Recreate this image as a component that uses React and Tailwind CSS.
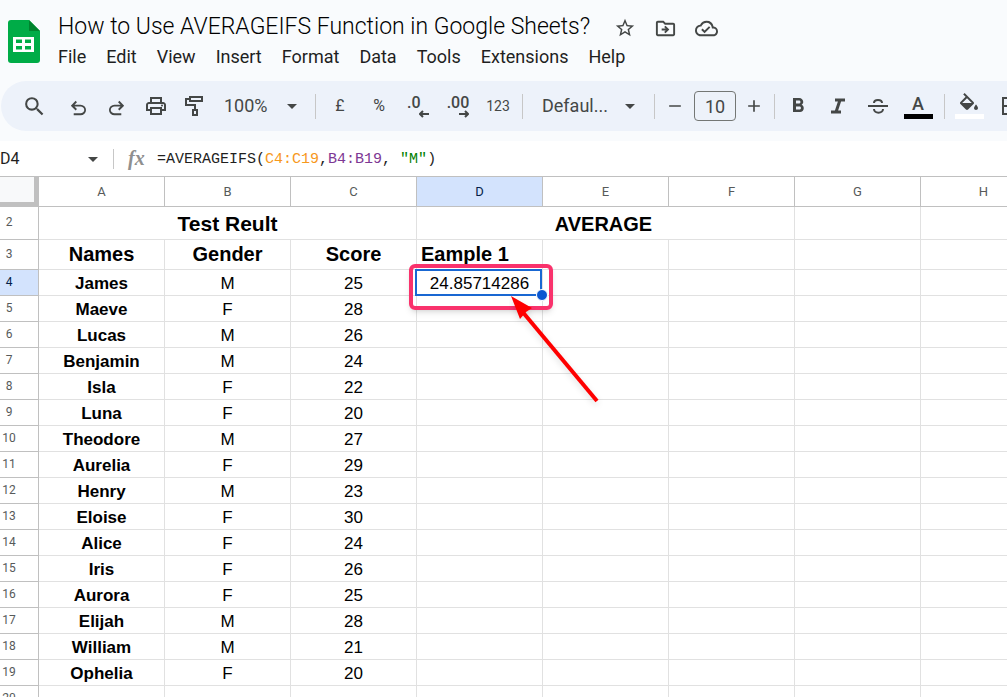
import { useState } from 'react';
import {
  MdSearch,
  MdOutlinePrint,
  MdStarBorder,
  MdOutlineDriveFileMove,
  MdOutlineCloudDone,
  MdArrowDropDown,
  MdRemove,
  MdAdd,
  MdFormatBold,
  MdBorderAll,
} from 'react-icons/md';

const menus = ['File', 'Edit', 'View', 'Insert', 'Format', 'Data', 'Tools', 'Extensions', 'Help'];

const columns = ['A', 'B', 'C', 'D', 'E', 'F', 'G', 'H'];

const students = [
  { name: 'James', gender: 'M', score: 25 },
  { name: 'Maeve', gender: 'F', score: 28 },
  { name: 'Lucas', gender: 'M', score: 26 },
  { name: 'Benjamin', gender: 'M', score: 24 },
  { name: 'Isla', gender: 'F', score: 22 },
  { name: 'Luna', gender: 'F', score: 20 },
  { name: 'Theodore', gender: 'M', score: 27 },
  { name: 'Aurelia', gender: 'F', score: 29 },
  { name: 'Henry', gender: 'M', score: 23 },
  { name: 'Eloise', gender: 'F', score: 30 },
  { name: 'Alice', gender: 'F', score: 24 },
  { name: 'Iris', gender: 'F', score: 26 },
  { name: 'Aurora', gender: 'F', score: 25 },
  { name: 'Elijah', gender: 'M', score: 28 },
  { name: 'William', gender: 'M', score: 21 },
  { name: 'Ophelia', gender: 'F', score: 20 },
];

const SheetsLogo = () => (
  <svg viewBox="0 0 32 43" className="w-8 h-[43px] shrink-0" aria-hidden="true">
    <path d="M3 0h18l11 11v29a3 3 0 0 1-3 3H3a3 3 0 0 1-3-3V3a3 3 0 0 1 3-3z" fill="#00ac47" />
    <path d="M21 0l11 11H21z" fill="#00832d" />
    <path
      d="M5 17h21v15H5zM8 19.500v3.500h6v-3.500zM17 19.500v3.500h6v-3.500zM8 26v3.500h6V26zM17 26v3.500h6V26z"
      fill="#fff"
      fillRule="evenodd"
    />
  </svg>
);

const Symbol = ({ d, className }) => (
  <svg viewBox="0 -960 960 960" fill="currentColor" className={className} aria-hidden="true">
    <path d={d} />
  </svg>
);

const UNDO =
  'M280-200v-80h284q63 0 109.500-40T720-420q0-60-46.500-100T564-560H312l104 104-56 56-200-200 200-200 56 56-104 104h252q97 0 163.500 63T794-420q0 94-66.500 157T564-200H280Z';
const REDO =
  'M396-200q-97 0-163.500-63T166-420q0-94 66.500-157T396-640h252L544-744l56-56 200 200-200 200-56-56 104-104H396q-63 0-109.500 40T240-420q0 60 46.500 100T396-280h284v80H396Z';

const PaintRoller = () => (
  <svg viewBox="0 0 20 24" fill="none" stroke="currentColor" strokeWidth="2" className="w-5 h-6" aria-hidden="true">
    <path d="M6 3h12v4H6zM6 5H2v6h9v5M9 16h4v5H9z" />
  </svg>
);

const Strikethrough = () => (
  <svg viewBox="0 0 20 20" fill="none" stroke="currentColor" strokeWidth="2" className="w-5 h-5" aria-hidden="true">
    <path d="M0 10h20M6 7c0-4 8-4 8 0M6 13c0 5 9 5 9 0" />
  </svg>
);

const ItalicMark = () => (
  <svg viewBox="0 0 14 16" fill="none" stroke="currentColor" strokeWidth="3" className="w-3.5 h-4" aria-hidden="true">
    <path d="M4 2h10M0 14h10M9 2L5 14" />
  </svg>
);

const PaintBucket = () => (
  <svg viewBox="1 0 22 17" fill="currentColor" className="w-[22px] h-[17px]" aria-hidden="true">
    <path d="M16.560 8.940L7.620 0 6.210 1.410l2.380 2.380-5.150 5.150c-.590.590-.590 1.540 0 2.120l5.500 5.500c.290.290.680.440 1.060.440s.770-.150 1.060-.440l5.500-5.500c.590-.580.590-1.530 0-2.120zM5.210 10L10 5.210 14.790 10H5.210zM19 11.500s-2 2.170-2 3.500c0 1.100.900 2 2 2s2-.900 2-2c0-1.330-2-3.500-2-3.500z" />
  </svg>
);

const SmallArrow = ({ flip }) => (
  <svg viewBox="0 0 10 8" fill="none" stroke="currentColor" strokeWidth="2" className="w-2.5 h-2" aria-hidden="true">
    <path d={flip ? 'M0 4h9M6 1l3 3-3 3' : 'M10 4H1M4 1L1 4l3 3'} />
  </svg>
);

const ToolButton = ({ label, className, children }) => (
  <button
    type="button"
    aria-label={label}
    title={label}
    className={`flex h-8 shrink-0 items-center rounded hover:bg-[#dfe4ec] ${className}`}
  >
    {children}
  </button>
);

const Divider = ({ className }) => <span className={`h-[25px] w-px shrink-0 bg-[#c7c7c7] ${className}`} />;

const Header = () => (
  <header className="flex h-[81px] shrink-0 pl-2 pt-[11px]">
    <div className="pt-[9px]">
      <SheetsLogo />
    </div>
    <div className="pl-[18px]">
      <div className="flex h-8 items-center">
        <h1 className="whitespace-nowrap text-[23px] font-light text-black">
          How to Use AVERAGEIFS Function in Google Sheets?
        </h1>
        <div className="flex gap-[18px] pl-6 pt-0.5 text-[#444746]">
          <button type="button" aria-label="Star">
            <MdStarBorder size={22} />
          </button>
          <button type="button" aria-label="Move">
            <MdOutlineDriveFileMove size={23} />
          </button>
          <button type="button" aria-label="Document status">
            <MdOutlineCloudDone size={23} />
          </button>
        </div>
      </div>
      <nav className="flex gap-5 text-lg text-[#1f1f1f]">
        {menus.map((menu) => (
          <button key={menu} type="button">
            {menu}
          </button>
        ))}
      </nav>
    </div>
  </header>
);

const Toolbar = () => {
  const [fontSize, setFontSize] = useState('10');

  return (
    <div className="ml-px flex h-[50px] shrink-0 items-center overflow-hidden rounded-l-full bg-[#edf2fa] text-[#444746]">
      <ToolButton label="Search the menus" className="ml-[17px] w-8 justify-center">
        <MdSearch size={25} />
      </ToolButton>
      <ToolButton label="Undo" className="ml-3 w-8 justify-center pt-1">
        <Symbol d={UNDO} className="w-[23px] h-[23px]" />
      </ToolButton>
      <ToolButton label="Redo" className="ml-1.5 w-8 justify-center pt-1">
        <Symbol d={REDO} className="w-[23px] h-[23px]" />
      </ToolButton>
      <ToolButton label="Print" className="ml-2 w-8 justify-center">
        <MdOutlinePrint size={24} />
      </ToolButton>
      <ToolButton label="Paint format" className="ml-1.5 w-8 justify-center">
        <PaintRoller />
      </ToolButton>
      <ToolButton label="Zoom" className="ml-3.5 w-20 justify-between text-lg">
        100%
        <MdArrowDropDown size={24} />
      </ToolButton>
      <Divider className="ml-[11px]" />
      <ToolButton label="Format as currency" className="ml-2 w-8 justify-center text-base">
        £
      </ToolButton>
      <ToolButton label="Format as percent" className="ml-[7px] w-8 justify-center text-base">
        %
      </ToolButton>
      <ToolButton label="Decrease decimal places" className="ml-[7px] w-8 justify-center">
        <span className="flex flex-col items-start pt-0.5 text-base leading-[14px] font-medium">
          .0
          <span className="pl-3">
            <SmallArrow />
          </span>
        </span>
      </ToolButton>
      <ToolButton label="Increase decimal places" className="ml-2 w-8 justify-center">
        <span className="flex flex-col items-start pt-0.5 text-base leading-[14px] font-medium">
          .00
          <span className="pl-3">
            <SmallArrow flip />
          </span>
        </span>
      </ToolButton>
      <ToolButton label="More formats" className="ml-2 w-8 justify-center text-sm">
        123
      </ToolButton>
      <Divider className="ml-2" />
      <ToolButton label="Font" className="ml-[19px] w-[100px] justify-between text-lg">
        Defaul...
        <MdArrowDropDown size={24} />
      </ToolButton>
      <Divider className="ml-3" />
      <ToolButton label="Decrease font size" className="ml-2 w-6 justify-center">
        <MdRemove size={20} />
      </ToolButton>
      <input
        aria-label="Font size"
        value={fontSize}
        onChange={(e) => setFontSize(e.target.value)}
        className="ml-[7px] h-[30px] w-[42px] shrink-0 rounded border border-[#747775] text-center text-lg"
      />
      <ToolButton label="Increase font size" className="ml-1.5 w-6 justify-center">
        <MdAdd size={20} />
      </ToolButton>
      <Divider className="ml-2" />
      <ToolButton label="Bold" className="ml-[7px] w-8 justify-center">
        <MdFormatBold size={24} />
      </ToolButton>
      <ToolButton label="Italic" className="ml-2 w-8 justify-center">
        <ItalicMark />
      </ToolButton>
      <ToolButton label="Strikethrough" className="ml-2 w-8 justify-center">
        <Strikethrough />
      </ToolButton>
      <ToolButton label="Text colour" className="ml-2 w-8 justify-center">
        <span className="flex flex-col items-center text-lg leading-5 font-medium">
          A
          <span className="h-[5px] w-[29px] bg-black" />
        </span>
      </ToolButton>
      <Divider className="ml-2.5" />
      <ToolButton label="Fill colour" className="ml-2 w-8 justify-center">
        <span className="flex flex-col items-center gap-1">
          <PaintBucket />
          <span className="h-[5px] w-[29px] bg-white" />
        </span>
      </ToolButton>
      <ToolButton label="Borders" className="ml-2.5 w-8 justify-center">
        <MdBorderAll size={24} />
      </ToolButton>
    </div>
  );
};

const FormulaBar = () => {
  const [cellName, setCellName] = useState('D4');

  return (
    <div className="mt-2.5 flex h-[35px] shrink-0 items-center bg-white text-[#1f1f1f]">
      <input
        aria-label="Name box"
        value={cellName}
        onChange={(e) => setCellName(e.target.value)}
        className="w-20 text-base"
      />
      <button type="button" aria-label="Named ranges" className="pl-px text-[#444746]">
        <MdArrowDropDown size={24} />
      </button>
      <span className="ml-2 h-5 w-px bg-[#c7c7c7]" />
      <span className="ml-3.5 w-[29px] pb-0.5 font-['Liberation_Serif',serif] text-xl font-bold italic text-[#8f8f8f]">
        fx
      </span>
      <div
        role="textbox"
        aria-label="Formula"
        contentEditable
        suppressContentEditableWarning
        className="flex-1 whitespace-pre pt-1 font-['Liberation_Mono',monospace] text-[15px]"
      >
        =AVERAGEIFS(<span className="text-[#f7981d]">C4:C19</span>,<span className="text-[#7e3794]">B4:B19</span>,{' '}
        <span className="text-[#008000]">"M"</span>)
      </div>
    </div>
  );
};

// Callout frame, arrow and selection handles, all anchored to the active cell
const ActiveCellMarks = () => (
  <>
    <span className="absolute -top-px -left-0.5 h-[27px] w-[127px] border-2 border-[#1967d2]" />
    <span className="absolute -right-1.5 -bottom-1.5 z-10 size-3 rounded-full border border-white bg-[#0b57d0]" />
    <span className="absolute -top-1.5 -left-2 h-[46px] w-36 rounded-md border-4 border-[#f9326c] shadow-md" />
    <svg viewBox="0 0 100 120" className="absolute top-6 left-[92px] z-20 h-[120px] w-[100px]" aria-hidden="true">
      <g className="drop-shadow-md">
        <path d="M12 16L88 107" stroke="#fe0000" strokeWidth="4" />
        <path d="M2 2L23 14L17 18L11 25Z" fill="#fe0000" />
      </g>
    </svg>
  </>
);

const RowHeader = ({ number, active }) => (
  <th
    scope="row"
    className={`border-r border-b border-[#c0c0c0] pr-5 pb-0.5 text-xs font-normal ${
      active ? 'bg-[#d3e3fd] text-[#041e49]' : 'text-[#575a5a]'
    }`}
  >
    {number}
  </th>
);

const Cell = ({ className = '', children, ...rest }) => (
  <td
    className={`border-r border-b border-[#e1e1e1] font-['Liberation_Sans',Arial,sans-serif] text-black ${className}`}
    {...rest}
  >
    {children}
  </td>
);

const EmptyCells = ({ from }) => columns.slice(from).map((column) => <Cell key={column} />);

const Sheet = () => (
  <main className="flex-1 overflow-hidden border-t border-[#c0c0c0] bg-white">
    <table className="w-[1047px] table-fixed border-separate border-spacing-0 text-center">
      <colgroup>
        <col className="w-[39px]" />
        {columns.map((column) => (
          <col key={column} className="w-[126px]" />
        ))}
      </colgroup>
      <thead>
        <tr className="h-[30px]">
          <td className="border-r-5 border-b-5 border-[#c0c0c0] bg-[#f8f9fa]" />
          {columns.map((column) => (
            <th
              key={column}
              scope="col"
              className={`border-r border-b border-[#c0c0c0] text-[13px] font-normal ${
                column === 'D' ? 'bg-[#d3e3fd] text-[#041e49]' : 'text-[#575a5a]'
              }`}
            >
              {column}
            </th>
          ))}
        </tr>
      </thead>
      <tbody>
        <tr className="h-[33px]">
          <RowHeader number={2} />
          <Cell colSpan={3} className="pt-0.5 text-[21px] leading-7 font-bold">
            Test Reult
          </Cell>
          <Cell colSpan={3} className="pt-0.5 pr-1 text-[20px] leading-7 font-bold">
            AVERAGE
          </Cell>
          <EmptyCells from={6} />
        </tr>
        <tr className="h-[30px] text-[20px] leading-[26px] font-bold">
          <RowHeader number={3} />
          <Cell className="pb-0.5">Names</Cell>
          <Cell className="pb-0.5">Gender</Cell>
          <Cell className="pb-0.5">Score</Cell>
          <Cell className="pb-0.5 pl-1 text-left">Eample 1</Cell>
          <EmptyCells from={4} />
        </tr>
        {students.map((student, i) => (
          <tr key={student.name} className="h-[26px] text-[17px] leading-[22px]">
            <RowHeader number={i + 4} active={i === 0} />
            <Cell className="pt-0.5 font-bold">{student.name}</Cell>
            <Cell className="pt-0.5">{student.gender}</Cell>
            <Cell className="pt-0.5">{student.score}</Cell>
            {i === 0 ? (
              <Cell className="relative pt-0.5">
                24.85714286
                <ActiveCellMarks />
              </Cell>
            ) : (
              <Cell />
            )}
            <EmptyCells from={4} />
          </tr>
        ))}
        <tr className="h-[26px]">
          <RowHeader number={20} />
          <EmptyCells from={0} />
        </tr>
      </tbody>
    </table>
  </main>
);

const App = () => (
  <div className="flex h-screen flex-col overflow-hidden bg-[#f9fbfd] font-[Roboto,sans-serif]">
    <Header />
    <Toolbar />
    <FormulaBar />
    <Sheet />
  </div>
);

export default App;
